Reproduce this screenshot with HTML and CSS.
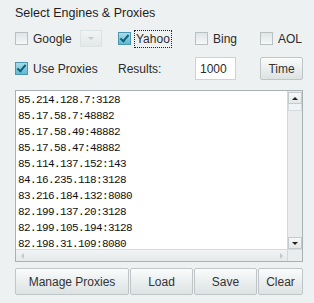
FILE: index.html
```html
<!DOCTYPE html>
<html lang="en">
<head>
    <meta charset="UTF-8">
    <title>Select Engines &amp; Proxies</title>
    <link rel="stylesheet" href="styles.css">
</head>
<body>
    <div class="panel">
        <div class="titulo">Select Engines &amp; Proxies</div>

        <div class="fila fila-motores">
            <div class="celda">
                <span class="caja"></span><span class="etiqueta">Google</span>
                <span class="combo"><span class="flecha-gris"></span></span>
            </div>
            <div class="celda">
                <span class="caja marcada"></span><span class="etiqueta foco">Yahoo</span>
            </div>
            <div class="celda">
                <span class="caja"></span><span class="etiqueta">Bing</span>
            </div>
            <div class="celda">
                <span class="caja"></span><span class="etiqueta">AOL</span>
            </div>
        </div>

        <div class="fila fila-opciones">
            <div class="celda">
                <span class="caja marcada"></span><span class="etiqueta">Use Proxies</span>
            </div>
            <div class="celda"><span class="etiqueta">Results:</span></div>
            <div class="celda"><span class="entrada">1000</span></div>
            <div class="celda"><span class="boton boton-time">Time</span></div>
        </div>

        <div class="lista">
            <div class="lineas">
                <div>85.214.128.7:3128</div>
                <div>85.17.58.7:48882</div>
                <div>85.17.58.49:48882</div>
                <div>85.17.58.47:48882</div>
                <div>85.114.137.152:143</div>
                <div>84.16.235.118:3128</div>
                <div>83.216.184.132:8080</div>
                <div>82.199.137.20:3128</div>
                <div>82.199.105.194:3128</div>
                <div>82.198.31.109:8080</div>
            </div>
            <div class="barra-v">
                <span class="flecha-btn"><span class="tri-arriba"></span></span>
                <span class="pulgar"></span>
                <span class="relleno"></span>
                <span class="flecha-btn"><span class="tri-abajo"></span></span>
            </div>
            <div class="barra-h">
                <span class="tri-izq"></span>
                <span class="relleno"></span>
                <span class="tri-der"></span>
            </div>
            <div class="esquina"></div>
        </div>

        <div class="acciones">
            <span class="boton b-manage">Manage Proxies</span>
            <span class="boton b-load">Load</span>
            <span class="boton b-save">Save</span>
            <span class="boton b-clear">Clear</span>
        </div>
    </div>
</body>
</html>
```

FILE: styles.css
```css
body {
    margin: 0;
    background: #eef1f1;
    font-family: "Liberation Sans", Arial, sans-serif;
    font-size: 12px;
    color: #2b2b2b;
}

.panel {
    width: 288px;
    padding: 6px 0 0 15px;
}

.titulo {
    line-height: 14px;
    font-size: 12.5px;
    color: #1e1e1e;
}

.fila {
    display: grid;
    grid-template-columns: 103px 77px 65px 43px;
    align-items: center;
}

.fila-motores {
    margin-top: 10px;
    height: 16px;
}

.fila-opciones {
    margin-top: 11px;
    height: 23px;
}

.celda {
    display: flex;
    align-items: center;
    height: 100%;
}

.caja {
    box-sizing: border-box;
    width: 13px;
    height: 13px;
    margin-right: 5px;
    border: 1px solid #b9c0c1;
    background: linear-gradient(#dfe4e4, #f7f8f8);
    position: relative;
}

.caja.marcada {
    border-color: #4c97ad;
    background: linear-gradient(#a9dce9, #5fb9d2);
}

.caja.marcada::after {
    content: "";
    position: absolute;
    left: 3px;
    top: 0px;
    width: 3px;
    height: 7px;
    border: solid #11617c;
    border-width: 0 2px 2px 0;
    transform: rotate(40deg);
}

.etiqueta {
    line-height: 14px;
}

.foco {
    outline: 1px dotted #222;
    outline-offset: 1px;
}

.combo {
    box-sizing: border-box;
    width: 22px;
    height: 17px;
    margin-left: 8px;
    border: 1px solid #dde2e2;
    background: linear-gradient(#f2f4f4, #e4e8e8);
    display: flex;
    align-items: center;
    justify-content: center;
}

.flecha-gris {
    width: 0;
    height: 0;
    border-left: 3px solid transparent;
    border-right: 3px solid transparent;
    border-top: 3px solid #c5cbcb;
}

.entrada {
    box-sizing: border-box;
    width: 41px;
    height: 23px;
    padding: 4px 0 0 4px;
    background: #fff;
    border: 1px solid #cdd3d4;
    line-height: 14px;
}

.boton {
    box-sizing: border-box;
    display: flex;
    align-items: center;
    justify-content: center;
    height: 100%;
    border: 1px solid #c0c6c7;
    border-radius: 2px;
    background: linear-gradient(#fbfcfc, #e9eded 55%, #dde2e2);
    color: #333;
}

.boton-time {
    width: 44px;
    height: 23px;
}

.lista {
    box-sizing: border-box;
    width: 288px;
    height: 172px;
    margin-top: 10px;
    border: 1px solid #a9b1b3;
    background: #fff;
    display: grid;
    grid-template-columns: 1fr 15px;
    grid-template-rows: 1fr 12px;
    overflow: hidden;
}

.lineas {
    padding: 1px 0 0 2px;
    font-family: "Liberation Mono", monospace;
    font-size: 11px;
    letter-spacing: -0.6px;
    line-height: 16px;
    color: #111;
    overflow: hidden;
}

.barra-v {
    display: flex;
    flex-direction: column;
    background: #e9eded;
    border-left: 1px solid #d3d9da;
    padding-top: 1px;
}

.flecha-btn {
    box-sizing: border-box;
    height: 12px;
    border: 1px solid #c4cbcc;
    background: linear-gradient(#f6f8f8, #e2e7e7);
    display: flex;
    align-items: center;
    justify-content: center;
}

.pulgar {
    height: 6px;
    border: 1px solid #d5dbdc;
    border-top: none;
    background: #f1f4f4;
}

.barra-v .relleno {
    flex: 1;
}

.tri-arriba,
.tri-abajo {
    width: 0;
    height: 0;
    border-left: 3px solid transparent;
    border-right: 3px solid transparent;
}

.tri-arriba {
    border-bottom: 3px solid #222;
}

.tri-abajo {
    border-top: 3px solid #222;
}

.barra-h {
    display: flex;
    align-items: center;
    padding: 0 4px 0 5px;
    background: linear-gradient(#f1f4f4, #e5e9e9);
    border-top: 1px solid #d6dcdd;
}

.barra-h .relleno {
    flex: 1;
}

.tri-izq,
.tri-der {
    width: 0;
    height: 0;
    border-top: 3px solid transparent;
    border-bottom: 3px solid transparent;
}

.tri-izq {
    border-right: 3px solid #c3c9ca;
}

.tri-der {
    border-left: 3px solid #c3c9ca;
}

.esquina {
    background: #e9eded;
    border-left: 1px solid #d3d9da;
    border-top: 1px solid #d6dcdd;
}

.acciones {
    display: flex;
    gap: 1px;
    height: 27px;
    margin-top: 6px;
    width: 288px;
}

.b-manage { width: 114px; }
.b-load { width: 63px; }
.b-save { width: 63px; }
.b-clear { flex: 1; }
```
